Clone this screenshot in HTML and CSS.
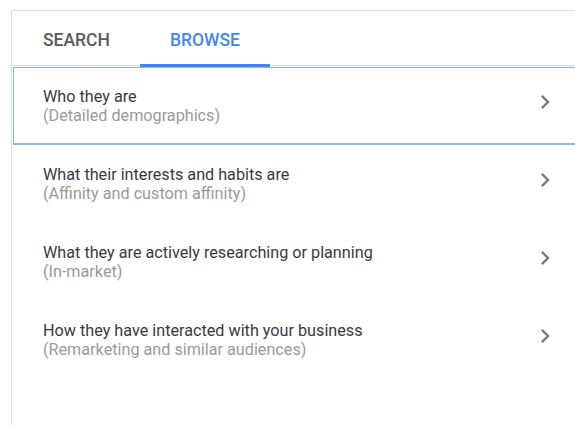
FILE: index.html
```html
<!DOCTYPE html>
<html>
<head>
<meta charset="utf-8">
<link rel="stylesheet" href="styles.css">
</head>
<body>
<div class="panel">
  <div class="tabs">
    <div class="tab">SEARCH</div>
    <div class="tab active">BROWSE</div>
  </div>
  <div class="list">
    <div class="row selected">
      <div class="text">
        <div class="title">Who they are</div>
        <div class="sub">(Detailed demographics)</div>
      </div>
      <svg class="chev" viewBox="0 0 24 24" width="28" height="28"><path d="M10 6L8.59 7.41 13.17 12l-4.58 4.59L10 18l6-6z"/></svg>
    </div>
    <div class="row">
      <div class="text">
        <div class="title">What their interests and habits are</div>
        <div class="sub">(Affinity and custom affinity)</div>
      </div>
      <svg class="chev" viewBox="0 0 24 24" width="28" height="28"><path d="M10 6L8.59 7.41 13.17 12l-4.58 4.59L10 18l6-6z"/></svg>
    </div>
    <div class="row">
      <div class="text">
        <div class="title">What they are actively researching or planning</div>
        <div class="sub">(In-market)</div>
      </div>
      <svg class="chev" viewBox="0 0 24 24" width="28" height="28"><path d="M10 6L8.59 7.41 13.17 12l-4.58 4.59L10 18l6-6z"/></svg>
    </div>
    <div class="row">
      <div class="text">
        <div class="title">How they have interacted with your business</div>
        <div class="sub">(Remarketing and similar audiences)</div>
      </div>
      <svg class="chev" viewBox="0 0 24 24" width="28" height="28"><path d="M10 6L8.59 7.41 13.17 12l-4.58 4.59L10 18l6-6z"/></svg>
    </div>
  </div>
</div>
</body>
</html>
```
FILE: styles.css
```css
html, body {
  margin: 0;
  padding: 0;
  background: #fff;
  overflow: hidden;
  height: 425px;
}
body {
  font-family: Roboto, "Liberation Sans", sans-serif;
}
.panel {
  margin: 10px 0 0 11px;
  width: 600px;
  height: 415px;
  border-left: 1px solid #dcdcdc;
  border-top: 1px solid #dcdcdc;
  box-sizing: border-box;
}
.tabs {
  display: flex;
  height: 55px;
  border-bottom: 1px solid #dcdcdc;
  box-sizing: border-box;
  padding-left: 1px;
}
.tab {
  position: relative;
  padding: 0 30px;
  font-size: 17.5px;
  font-weight: 500;
  color: #5a5a5a;
  line-height: 59px;
  height: 54px;
  width: 70px;
  text-align: center;
  box-sizing: content-box;
  white-space: nowrap;
}
.tab:first-child {
  width: 68px;
  padding-right: 29px;
  text-align: left;
}
.tab.active {
  color: #4285f4;
}
.tab.active::after {
  content: "";
  position: absolute;
  left: 0;
  right: 0;
  bottom: -2px;
  height: 3px;
  background: #4285f4;
}
.list {
  margin: 1px 0 0 1px;
}
.row {
  display: flex;
  align-items: center;
  height: 78px;
  box-sizing: border-box;
  border: 1px solid transparent;
  border-bottom-width: 2px;
  border-right: none;
  padding: 0 52px 0 29px;
}
.row.selected {
  border-color: #8ab4f8;
}
.text {
  flex: 1;
  font-size: 16.2px;
  line-height: 19px;
  padding-top: 1px;
}
.title {
  color: #3a3a3a;
}
.sub {
  color: #9a9a9a;
}
.chev {
  fill: #7a7a7a;
  margin-top: -8px;
}
```
